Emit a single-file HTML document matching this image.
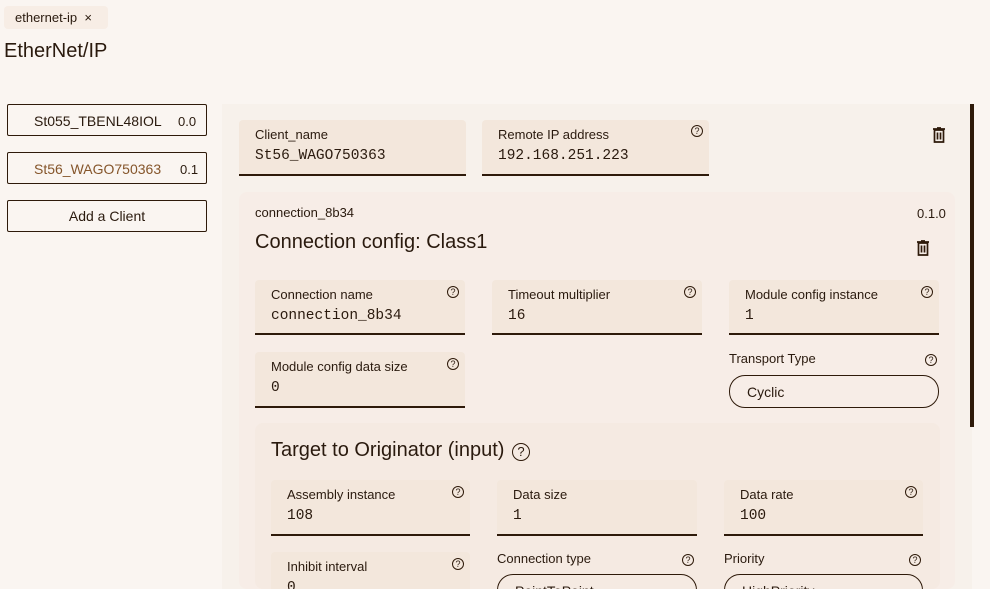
<!DOCTYPE html>
<html style="width:990px;height:589px;overflow:hidden"><head><meta charset="utf-8"><style>
*{box-sizing:border-box;margin:0;padding:0}
body{width:990px;height:589px;overflow:hidden;background:#faf5f1;font-family:"Liberation Sans",sans-serif;color:#2a1a0e;position:relative}
.a{position:absolute}
.tab{left:4px;top:6px;width:104px;height:23px;background:#f7ede5;border-radius:4px;font-size:13px;padding:4px 0 0 11px}
.btn{left:7px;width:200px;height:32px;border:1.5px solid #2e1a0a;border-radius:2px;font-size:14px}
.f{background:#f3e7dc;border-bottom:2px solid #2e1a0a;border-radius:4px 4px 0 0;overflow:hidden}
.f .l{position:absolute;left:16px;top:7px;font-size:13px}
.f .v{position:absolute;left:16px;top:28px;font-size:14.5px;font-family:"Liberation Mono",monospace}
.q{position:absolute;width:12px;height:12px;border:1px solid #2e1a0a;border-radius:50%;font-size:9px;line-height:10px;text-align:center}
.sel{border:1.5px solid #2e1a0a;border-radius:16px;height:33px;font-size:14px;padding:8px 0 0 17px}
.tr{width:14px;height:16px}
</style></head><body>
<div class="a tab">ethernet-ip&nbsp; ×</div>
<div class="a" style="left:4px;top:40px;font-size:20px">EtherNet/IP</div>
<div class="a btn" style="top:104px"><span class="a" style="left:26px;top:8px">St055_TBENL48IOL</span><span class="a" style="left:170px;top:9px;font-size:13px">0.0</span></div>
<div class="a btn" style="top:152px"><span class="a" style="left:26px;top:8px;color:#85552a">St56_WAGO750363</span><span class="a" style="left:172px;top:9px;font-size:13px">0.1</span></div>
<div class="a btn" style="top:200px;text-align:center;padding-top:7px">Add a Client</div>
<div class="a" style="left:222px;top:104px;width:750px;height:485px;background:#f7f1eb"></div>
<div class="a" style="left:970px;top:104px;width:4px;height:323px;background:#2e1a0a"></div>
<div class="a f" style="left:239px;top:120px;width:227px;height:56px"><span class="l">Client_name</span><span class="v">St56_WAGO750363</span></div>
<div class="a f" style="left:482px;top:120px;width:227px;height:56px"><span class="l">Remote IP address</span><span class="v">192.168.251.223</span><span class="q" style="left:209px;top:5px">?</span></div>
<svg class="a tr" style="left:932px;top:127px" viewBox="0 0 14 16"><path d="M1 2h12M5 1h4M2.5 3h9v12h-9zM5.5 5.5v7M8.5 5.5v7" fill="none" stroke="#2e1a0a" stroke-width="1.7"/></svg>
<div class="a" style="left:239px;top:192px;width:716px;height:397px;background:#f7ede7;border-radius:8px"></div>
<div class="a" style="left:255px;top:205px;font-size:13px">connection_8b34</div>
<div class="a" style="left:917px;top:206px;font-size:13px">0.1.0</div>
<div class="a" style="left:255px;top:231px;font-size:20px">Connection config: Class1</div>
<svg class="a tr" style="left:916px;top:240px" viewBox="0 0 14 16"><path d="M1 2h12M5 1h4M2.5 3h9v12h-9zM5.5 5.5v7M8.5 5.5v7" fill="none" stroke="#2e1a0a" stroke-width="1.7"/></svg>
<div class="a f" style="left:255px;top:280px;width:210px;height:55px"><span class="l">Connection name</span><span class="v">connection_8b34</span><span class="q" style="left:192px;top:6px">?</span></div>
<div class="a f" style="left:492px;top:280px;width:210px;height:55px"><span class="l">Timeout multiplier</span><span class="v">16</span><span class="q" style="left:192px;top:6px">?</span></div>
<div class="a f" style="left:729px;top:280px;width:210px;height:55px"><span class="l">Module config instance</span><span class="v">1</span><span class="q" style="left:192px;top:6px">?</span></div>
<div class="a f" style="left:255px;top:352px;width:210px;height:56px"><span class="l">Module config data size</span><span class="v">0</span><span class="q" style="left:192px;top:6px">?</span></div>
<div class="a" style="left:729px;top:351px;font-size:13px">Transport Type</div>
<span class="q" style="left:925px;top:354px">?</span>
<div class="a sel" style="left:729px;top:375px;width:210px">Cyclic</div>
<div class="a" style="left:255px;top:423px;width:685px;height:166px;background:#f5eae2;border-radius:8px"></div>
<div class="a" style="left:271px;top:439px;font-size:20px">Target to Originator (input)</div>
<span class="q" style="left:512px;top:443px;width:18px;height:18px;font-size:13px;line-height:16px;border-width:1.5px">?</span>
<div class="a f" style="left:271px;top:480px;width:199px;height:56px"><span class="l">Assembly instance</span><span class="v">108</span><span class="q" style="left:181px;top:6px">?</span></div>
<div class="a f" style="left:497px;top:480px;width:200px;height:56px"><span class="l">Data size</span><span class="v">1</span></div>
<div class="a f" style="left:724px;top:480px;width:199px;height:56px"><span class="l">Data rate</span><span class="v">100</span><span class="q" style="left:181px;top:6px">?</span></div>
<div class="a f" style="left:271px;top:552px;width:199px;height:37px;border-bottom:none"><span class="l">Inhibit interval</span><span class="v">0</span><span class="q" style="left:181px;top:6px">?</span></div>
<div class="a" style="left:497px;top:551px;font-size:13px">Connection type</div>
<span class="q" style="left:682px;top:554px">?</span>
<div class="a sel" style="left:497px;top:574px;width:200px">PointToPoint</div>
<div class="a" style="left:724px;top:551px;font-size:13px">Priority</div>
<span class="q" style="left:909px;top:554px">?</span>
<div class="a sel" style="left:724px;top:574px;width:199px">HighPriority</div>
</body></html>
